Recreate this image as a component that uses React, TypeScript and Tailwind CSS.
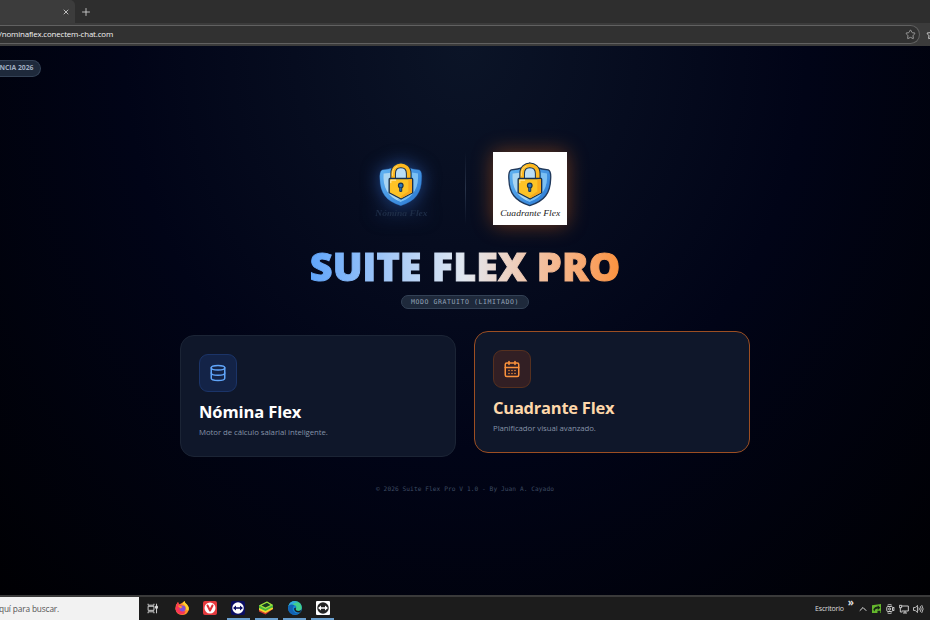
import type { ReactNode } from "react"
import { CalendarDays, ChevronUp, Database, Plus, Star, X } from "lucide-react"

interface ShieldLogoProps {
  id: string
  label: string
  outlined?: boolean
}

function ShieldLogo({ id, label, outlined = false }: ShieldLogoProps) {
  return (
    <svg viewBox="0 0 222 222" className="h-full w-full">
      <defs>
        <linearGradient id={id} x1="0" y1="0" x2="1" y2="1">
          <stop offset="0" stopColor="#66b8f5" />
          <stop offset="1" stopColor="#2877d2" />
        </linearGradient>
      </defs>
      {/* Shield */}
      <path
        d="M111 34 Q97 50 55 54 Q46 58 48 82 C49 123 66 148 111 162 C156 148 173 123 174 82 Q176 58 167 54 Q125 50 111 34Z"
        fill={`url(#${id})`}
        stroke={outlined ? "#20385a" : "#2d70bd"}
        strokeWidth={outlined ? 4 : 1}
      />
      <path
        d="M111 48 Q94 62 59 65 C56 105 71 136 111 150 C151 136 166 105 163 65 Q128 62 111 48Z"
        fill="#4ba3eb"
      />
      <path d="M111 48 Q94 62 59 65 C56 105 71 136 111 150Z" fill="#a9d5f2" />
      <path d="M145 62 L163 65 C166 105 151 136 111 150 L100 145 L147 116Z" fill="#7cc0f3" />
      {/* Padlock */}
      <path d="M88 82 V65 C88 32 135 32 135 65 V82" fill="#b9def5" stroke="#17304e" strokeWidth="17" />
      <path d="M88 82 V65 C88 32 135 32 135 65 V82" fill="none" stroke="#fdb81f" strokeWidth="11" />
      <path d="M86 72 V64 Q87 48 101 43" fill="none" stroke="#ffdc78" strokeWidth="3" />
      <path
        d="M78 80 H145 Q147 80 147 83 V123 L112 142 L76 123 V83 Q76 80 78 80Z"
        fill="#fec326"
        stroke="#17304e"
        strokeWidth="4"
        strokeLinejoin="round"
      />
      <path d="M134 82 H145 V122 L112 140 V134 L134 119Z" fill="#f8a91c" />
      <path d="M81 94 V85 H97" fill="none" stroke="#fff0b5" strokeWidth="3" />
      <circle cx="111" cy="101" r="7" fill="#2c78bd" stroke="#17304e" strokeWidth="3.5" />
      <path d="M108 108 V119 H114 V108" fill="#2c78bd" stroke="#17304e" strokeWidth="3" />
      <text
        x={outlined ? 22 : 34}
        y="192"
        textLength={outlined ? 181 : 158}
        lengthAdjust="spacingAndGlyphs"
        fontSize="27"
        fontStyle="italic"
        fontWeight={outlined ? 400 : 700}
        fontFamily="'Z003', 'URW Chancery L', 'Liberation Serif', cursive"
        fill={outlined ? "#222222" : "#1e2d47"}
      >
        {label}
      </text>
    </svg>
  )
}

function BrowserChrome() {
  return (
    <header className="h-[46px] shrink-0 overflow-hidden bg-[#2e2e2e] text-[#d6d6d6]">
      <div className="flex h-[23px] items-center">
        <div className="flex h-full w-[75px] items-center justify-end rounded-tr-[5px] bg-[#3c3c3c] pr-[5px]">
          <X className="h-2 w-2" strokeWidth={2.5} />
        </div>
        <Plus className="ml-[5px] h-[12px] w-[12px]" strokeWidth={1.7} />
      </div>
      <div className="flex h-[23px] items-center bg-[#3b3b3b]">
        <div className="flex h-[19px] w-[920px] shrink-0 items-center justify-between rounded-r-full border border-l-0 border-[#616161] bg-[#313131] pr-[3px]">
          <span className="-ml-px text-[7.9px] tracking-[-0.16px] whitespace-nowrap text-[#f2f2f2]">
            /nominaflex.conectem-chat.com
          </span>
          <Star className="h-[11px] w-[11px] text-[#a0a0a0]" />
        </div>
        <Star className="ml-[6px] h-[11px] w-[11px] shrink-0" />
      </div>
    </header>
  )
}

interface AppCardProps {
  title: string
  description: string
  icon: ReactNode
  cardClass: string
  iconClass: string
  titleClass: string
}

function AppCard({ title, description, icon, cardClass, iconClass, titleClass }: AppCardProps) {
  return (
    <article className={`h-[122px] w-[276px] rounded-[14px] border bg-[#0f172a] px-[18px] pt-[18px] ${cardClass}`}>
      <div className={`flex h-[38px] w-[38px] items-center justify-center rounded-[9px] border ${iconClass}`}>{icon}</div>
      <h2 className={`mt-[9px] text-[16.5px] leading-[22px] font-bold whitespace-nowrap ${titleClass}`}>{title}</h2>
      <p className="mt-[3px] text-[7.8px] leading-[12px] tracking-[-0.06px] whitespace-nowrap text-[#8593a8]">
        {description}
      </p>
    </article>
  )
}

function TaskSlot({ active = false, children }: { active?: boolean; children: ReactNode }) {
  return (
    <div
      className={`mr-[5.2px] flex h-[23px] w-[23px] items-center justify-center border-b-2 ${
        active ? "border-b-[#6a9fce]" : "border-b-transparent"
      }`}
    >
      <svg viewBox="0 0 28 28" className="h-[14px] w-[14px] shrink-0">
        {children}
      </svg>
    </div>
  )
}

function Taskbar() {
  return (
    <footer className="flex h-[25px] shrink-0 items-center border-t-2 border-[#3a3a3a] bg-[#1c1c1c]">
      <div className="flex h-full w-[139px] items-center bg-[#f2f2f2] text-[8.3px] whitespace-nowrap text-[#555]">
        <span className="-ml-px mt-px tracking-[-0.15px]">quí para buscar.</span>
      </div>
      <svg viewBox="0 0 30 30" className="ml-[8px] h-[11px] w-[11px]" fill="none" stroke="#ddd" strokeWidth="2.5">
        <path d="M3 2 V6 H19 V2 M3 28 V24 H19 V28 M3 9 H19 V20 H3Z M26 2 V28" />
        <path d="M23 9 H29 V14 H23Z" fill="#ddd" />
      </svg>
      <div className="ml-[12.4px] flex">
        <TaskSlot>
          <path d="M14 4 L19 0 Q20 5 24 7 Q29 13 27 19 Q24 28 14 28 Q3 27 1 17 Q0 8 6 2 L8 7 Q11 5 14 4Z" fill="#ff9429" />
          <path d="M1 15 Q2 7 6 2 L8 7 L14 8 L10 13 Q11 22 21 20 Q20 28 12 27 Q2 25 1 15Z" fill="#fa3556" />
          <path d="M19 0 Q20 5 24 7 Q29 13 27 19 Q21 19 22 13 Q20 7 15 5Z" fill="#ffd22f" />
          <circle cx="15" cy="15" r="6" fill="#8151d7" />
          <path d="M5 9 Q12 8 15 12 L11 15Z" fill="#ff9b28" />
        </TaskSlot>
        <TaskSlot>
          <rect width="28" height="28" rx="4" fill="#e4393c" />
          <circle cx="14" cy="14" r="11" fill="#fff" />
          <path d="M9 9 L14 19 L19 9" fill="none" stroke="#df3338" strokeWidth="4" strokeLinecap="round" strokeLinejoin="round" />
        </TaskSlot>
        <TaskSlot active>
          <rect width="28" height="28" rx="4" fill="#0a0d62" />
          <circle cx="14" cy="14" r="11.5" fill="#fff" />
          <path d="M4 14 L10 9 V12.5 H18 V9 L24 14 L18 19 V15.5 H10 V19Z" fill="#0a0d62" />
        </TaskSlot>
        <TaskSlot active>
          <path d="M0 16 L14 11 L28 16 L13 27 L0 21Z" fill="#d83930" />
          <path d="M0 13 L14 8 L28 13 V16 L13 24 L0 18Z" fill="#f1d82d" />
          <path d="M0 9 L16 1 L28 8 V12 L13 20 L0 14Z" fill="#45b83c" />
          <path d="M0 9 L16 1 L28 8 L13 16Z" fill="#a6e33b" />
          <path d="M5 9 L16 3.5 L23 8 L13 13Z" fill="#173c24" />
        </TaskSlot>
        <TaskSlot active>
          <circle cx="14" cy="14" r="14" fill="#1687d5" />
          <path d="M1 10 C4 -2 23 -3 27 10 Q29 19 20 20 Q15 20 16 16 Q19 8 9 8 Q4 8 1 10Z" fill="#43cf8a" />
          <path d="M1 10 C4 -1 14 -1 19 3 Q10 4 9 8 Q4 8 1 10Z" fill="#31a9df" />
          <path d="M1 10 Q7 5 13 9 Q8 12 10 19 Q14 26 23 24 Q16 30 7 26 Q-1 21 1 10Z" fill="#1262b4" />
          <path d="M16 13 Q13 20 22 20 L27 18 L24 23 Q13 24 12 15Z" fill="#1c1c1c" />
        </TaskSlot>
        <TaskSlot active>
          <rect width="28" height="28" rx="2" fill="#fff" />
          <circle cx="14" cy="14" r="11.5" fill="#242424" />
          <path d="M4 14 L10 9 V12.5 H18 V9 L24 14 L18 19 V15.5 H10 V19Z" fill="#fff" />
        </TaskSlot>
      </div>
      <div className="ml-auto flex items-center pr-[6px] text-[#dedede]">
        <span className="mt-px text-[7px] tracking-[-0.2px]">Escritorio</span>
        <span className="ml-[4px] -mt-[13px] text-[10px] leading-none font-bold">»</span>
        <ChevronUp className="ml-[3px] h-[12px] w-[12px]" />
        <svg viewBox="0 0 28 28" className="ml-[3px] h-[9px] w-[9px]">
          <path d="M0 4 L28 0 V28 H0Z" fill="#65b82d" />
          <path d="M4 16 Q9 7 18 8 V4 L26 12 L18 19 V14 Q10 13 7 23Z M17 21 H26 V28 H17Z" fill="#172615" />
        </svg>
        <svg viewBox="0 0 28 28" className="ml-[4px] h-[10px] w-[10px]" fill="none" stroke="currentColor" strokeWidth="2.5">
          <rect x="5" y="7" width="16" height="14" rx="3" />
          <circle cx="13" cy="14" r="3" />
          <path d="M21 12 L25 9 V19 L21 16 M7 3 Q13 0 19 3 M7 25 Q13 28 19 25" />
        </svg>
        <svg viewBox="0 0 30 28" className="ml-[4px] h-[10px] w-[10px]" fill="none" stroke="currentColor" strokeWidth="2.7">
          <path d="M8 5 H28 V20 H8 M18 20 V26 M12 26 H24 M1 3 H8 V10 H1Z M4 10 V23 H10" />
        </svg>
        <svg viewBox="0 0 30 28" className="ml-[4px] h-[10px] w-[11px]" fill="none" stroke="currentColor" strokeWidth="2.3">
          <path d="M1 10 H6 L12 4 V24 L6 18 H1Z M16 10 Q19 14 16 18 M20 6 Q25 14 20 22 M24 3 Q32 14 24 25" />
        </svg>
      </div>
    </footer>
  )
}

export default function App() {
  return (
    <div className="flex h-[620px] w-[930px] flex-col overflow-hidden bg-black font-['Open_Sans','Noto_Sans',sans-serif]">
      <BrowserChrome />

      <main className="relative flex h-[549px] flex-col items-center bg-[radial-gradient(ellipse_at_top,#0b1427_0%,#010417_52%,#000003_100%)] pt-[105.5px]">
        <div className="absolute top-[14px] left-0 flex h-[17px] w-[41px] items-center justify-end rounded-r-full border border-l-0 border-[#334155] bg-[#1e293b] pr-[6.5px] text-[6.8px] font-bold whitespace-nowrap text-[#a1afc2]">
          NCIA 2026
        </div>

        {/* Logos */}
        <div className="flex items-center gap-[27.5px]">
          <div className="h-[73.5px] w-[73.5px] drop-shadow-[0_0_9px_rgba(59,130,246,0.5)]">
            <ShieldLogo id="shield-nomina" label="Nómina Flex" />
          </div>
          <div className="h-[73.5px] w-px bg-gradient-to-b from-transparent via-[#263147] to-transparent" />
          <div className="h-[73.5px] w-[73.5px] bg-white shadow-[0_0_19px_rgba(249,115,22,0.42)]">
            <ShieldLogo id="shield-cuadrante" label="Cuadrante Flex" outlined />
          </div>
        </div>

        <h1 className="mt-[17px] bg-gradient-to-r from-[#60a5fa] via-[#e2e8f0] to-[#fb923c] bg-clip-text text-[39.5px] leading-[48px] font-extrabold tracking-[0.05px] whitespace-nowrap text-transparent [-webkit-text-stroke:1px_transparent]">
          SUITE FLEX PRO
        </h1>
        <div className="mt-[5px] flex h-[14px] w-[128px] items-center justify-center rounded-full border border-[#334155] bg-[#1e293b] pt-px font-['DejaVu_Sans_Mono',monospace] text-[6.5px] tracking-[0.58px] whitespace-nowrap text-[#94a3b8]">
          MODO GRATUITO (LIMITADO)
        </div>

        {/* Cards */}
        <div className="mt-[22px] flex items-start gap-[18px]">
          <AppCard
            title="Nómina Flex"
            description="Motor de cálculo salarial inteligente."
            icon={<Database className="h-[18px] w-[18px]" />}
            cardClass="mt-[4px] border-[#1b2435]"
            iconClass="border-[#1b3468] bg-[#132347] text-[#60a5fa]"
            titleClass="tracking-[-0.1px] text-white"
          />
          <AppCard
            title="Cuadrante Flex"
            description="Planificador visual avanzado."
            icon={<CalendarDays className="h-[18px] w-[18px]" />}
            cardClass="border-[#9c4e22]"
            iconClass="border-[#56301f] bg-[#321f24] text-[#fb923c]"
            titleClass="tracking-[-0.24px] text-[#fed7aa]"
          />
        </div>

        <p className="mt-[26px] font-['DejaVu_Sans_Mono',monospace] text-[6.2px] leading-[12px] tracking-[0.06px] whitespace-nowrap text-[#3d4b62]">
          © 2026 Suite Flex Pro V 1.0 - By Juan A. Cayado
        </p>
      </main>

      <Taskbar />
    </div>
  )
}
